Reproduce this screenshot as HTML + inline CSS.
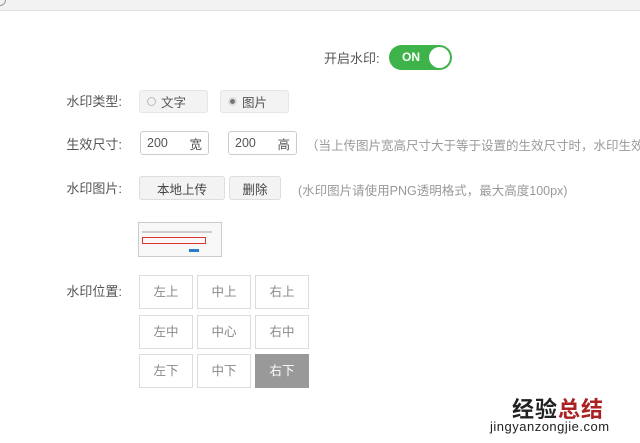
<!DOCTYPE html>
<html><head><meta charset="utf-8"><style>
body{margin:0;width:640px;height:443px;background:#fff;position:relative;overflow:hidden;font-family:"Liberation Sans","Noto Sans CJK SC",sans-serif;font-size:12.5px;color:#555}
.a{position:absolute}
.lbl{position:absolute;right:518px;font-size:13px;color:#555}
.box{position:absolute;border:1px solid #ddd;border-radius:3px;box-sizing:border-box;display:flex;align-items:center}
.cell{position:absolute;width:54px;height:34px;border:1px solid #ddd;box-sizing:border-box;text-align:center;line-height:32px;color:#888;font-size:12.5px}
</style></head><body>
<div class="a" style="left:0;top:0;width:640px;height:10px;background:#f2f2f2;border-bottom:1px solid #e0e0e0"></div>
<div class="a" style="left:-6px;top:-6px;width:10px;height:10px;border:1px solid #999;border-radius:50%"></div>
<div class="a" style="left:324px;top:48px;font-size:13px">开启水印:</div>
<div class="a" style="left:389px;top:45px;width:63px;height:25px;border-radius:13px;background:#3db34a;box-sizing:border-box"><span class="a" style="left:13px;top:5px;color:#fff;font-weight:bold;font-size:12px">ON</span><div class="a" style="right:2px;top:2px;width:21px;height:21px;border-radius:50%;background:#fff"></div></div>
<div class="lbl" style="top:91px">水印类型:</div>
<div class="box" style="left:139px;top:90px;width:69px;height:23px;background:#f3f3f3;border-color:#e6e6e6"><span style="display:inline-block;width:7px;height:7px;border:1px solid #bbb;border-radius:50%;margin:0 5px 0 7px"></span>文字</div>
<div class="box" style="left:220px;top:90px;width:69px;height:23px;background:#f3f3f3;border-color:#e6e6e6"><span style="display:inline-block;width:5px;height:5px;border:2px solid #ddd;background:#777;border-radius:50%;margin:0 5px 0 7px"></span>图片</div>
<div class="lbl" style="top:134px">生效尺寸:</div>
<div class="box" style="left:140px;top:131px;width:69px;height:24px;border-color:#ccc;justify-content:space-between;padding:0 6px">200<span>宽</span></div>
<div class="box" style="left:228px;top:131px;width:69px;height:24px;border-color:#ccc;justify-content:space-between;padding:0 6px">200<span>高</span></div>
<div class="a" style="left:306px;top:135px;color:#999;white-space:nowrap">（当上传图片宽高尺寸大于等于设置的生效尺寸时，水印生效</div>
<div class="lbl" style="top:178px">水印图片:</div>
<div class="box" style="left:139px;top:176px;width:86px;height:24px;background:#f3f3f3;justify-content:center;color:#444">本地上传</div>
<div class="box" style="left:229px;top:176px;width:52px;height:24px;background:#f3f3f3;justify-content:center;color:#444">删除</div>
<div class="a" style="left:298px;top:180px;color:#999;white-space:nowrap">(水印图片请使用PNG透明格式，最大高度100px)</div>
<div class="a" style="left:138px;top:222px;width:84px;height:35px;border:1px solid #ccc;background:#f8f8f8;box-sizing:border-box">
<div class="a" style="left:3px;top:8px;width:70px;height:2px;background:#ccc"></div>
<div class="a" style="left:3px;top:14px;width:62px;height:5px;border:1px solid #d33"></div>
<div class="a" style="left:50px;top:26px;width:10px;height:3px;background:#2a7ad0"></div>
</div>
<div class="lbl" style="top:281px">水印位置:</div>
<div class="cell" style="left:139px;top:275px">左上</div><div class="cell" style="left:197px;top:275px">中上</div><div class="cell" style="left:255px;top:275px">右上</div>
<div class="cell" style="left:139px;top:315px">左中</div><div class="cell" style="left:197px;top:315px">中心</div><div class="cell" style="left:255px;top:315px">右中</div>
<div class="cell" style="left:139px;top:354px">左下</div><div class="cell" style="left:197px;top:354px">中下</div><div class="cell" style="left:255px;top:354px;background:#999;border-color:#999;color:#fff">右下</div>
<div class="a" style="left:512px;top:392px;font-size:22px;font-weight:bold;color:#222;letter-spacing:1px">经验<span style="color:#a22">总结</span></div>
<div class="a" style="left:490px;top:419px;font-size:13px;color:#222;letter-spacing:0.5px">jingyanzongjie.com</div>
</body></html>
